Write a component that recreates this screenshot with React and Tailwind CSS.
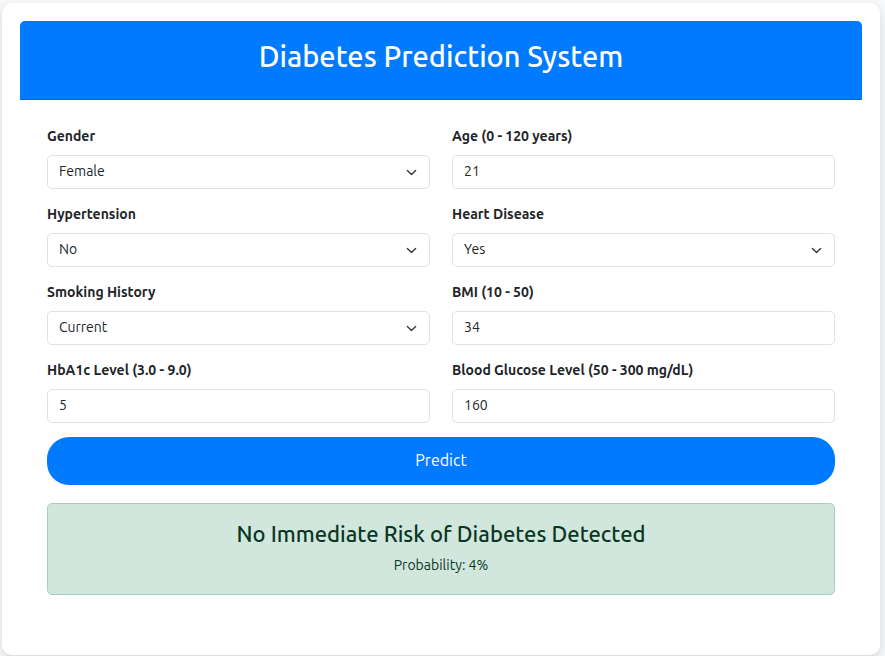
const labelClass = "mb-2 block text-[14px] leading-[21px] font-semibold";
const fieldClass =
  "block h-[34px] w-full appearance-none rounded-[5px] border border-[#dee2e6] bg-white px-[11px] pb-[2px] text-[14px] leading-[21px] text-[#212529]";

function SelectField({ id, label, value, options }) {
  return (
    <div>
      <label htmlFor={id} className={labelClass}>{label}</label>
      <div className="relative">
        <select id={id} defaultValue={value} className={fieldClass}>
          {options.map((o) => (
            <option key={o}>{o}</option>
          ))}
        </select>
        <svg
          viewBox="0 0 16 16"
          className="pointer-events-none absolute top-3 right-[13px] size-[11px]"
          fill="none"
          stroke="#343a40"
          strokeLinecap="round"
          strokeLinejoin="round"
          strokeWidth="2"
        >
          <path d="m2 5 6 6 6-6" />
        </svg>
      </div>
    </div>
  );
}

function TextField({ id, label, value }) {
  return (
    <div>
      <label htmlFor={id} className={labelClass}>{label}</label>
      <input id={id} type="text" inputMode="decimal" defaultValue={value} className={fieldClass} />
    </div>
  );
}

export default function App() {
  return (
    <div className="min-h-screen bg-[#f8f9fa] pt-[3px] pr-[5px] pb-px pl-[2px] font-['Ubuntu','Noto_Sans',sans-serif] text-[#212529]">
      <main className="min-h-[652px] rounded-[10px] bg-white p-[18px] shadow-[0_4px_11px_rgba(0,0,0,0.15)]">
        <header className="rounded-t-[5px] border-b border-[#0068d9] bg-[#007bff] px-4 pt-[18px] pb-[25px] text-center text-white">
          <h1 className="text-[29px] leading-[35px] font-medium">Diabetes Prediction System</h1>
        </header>
        <form className="px-[27px] pt-[26px]" onSubmit={(e) => e.preventDefault()}>
          <div className="grid grid-cols-2 gap-x-[22px] gap-y-[15px]">
            <SelectField id="gender" label="Gender" value="Female" options={["Female", "Male", "Other"]} />
            <TextField id="age" label="Age (0 - 120 years)" value="21" />
            <SelectField id="hypertension" label="Hypertension" value="No" options={["No", "Yes"]} />
            <SelectField id="heart" label="Heart Disease" value="Yes" options={["No", "Yes"]} />
            <SelectField id="smoking" label="Smoking History" value="Current" options={["Never", "Current", "Former"]} />
            <TextField id="bmi" label="BMI (10 - 50)" value="34" />
            <TextField id="hba1c" label="HbA1c Level (3.0 - 9.0)" value="5" />
            <TextField id="glucose" label="Blood Glucose Level (50 - 300 mg/dL)" value="160" />
          </div>
          <button type="submit" className="mt-[14px] h-12 w-full rounded-[22px] bg-[#007bff] pb-[2px] text-[16px] leading-6 text-white">
            Predict
          </button>
          <section className="mt-[18px] rounded-[5px] border border-[#a3cfbb] bg-[#d1e7dd] px-4 pt-[17px] pb-[18px] text-center text-[#0a3622]">
            <h2 className="mb-2 text-[22px] leading-[26px] font-medium">No Immediate Risk of Diabetes Detected</h2>
            <p className="text-[14px] leading-[21px]">Probability: 4%</p>
          </section>
        </form>
      </main>
    </div>
  );
}
